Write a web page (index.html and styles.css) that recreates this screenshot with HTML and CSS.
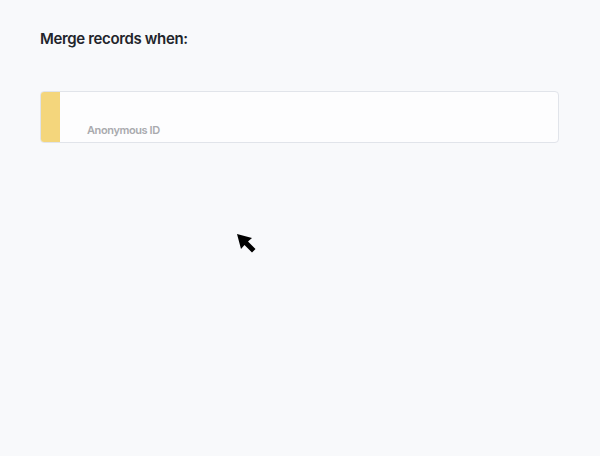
FILE: index.html
```html
<!DOCTYPE html>
<html lang="en">
<head>
  <meta charset="UTF-8">
  <title>Merge records</title>
  <link rel="stylesheet" href="styles.css">
</head>
<body>
  <div class="page">
    <h1>Merge records when:</h1>
    <div class="rule-card">
      <div class="rule-accent"></div>
      <div class="rule-body">
        <span class="rule-label">Anonymous ID</span>
      </div>
    </div>
  </div>
  <svg class="cursor" width="20" height="20" viewBox="0 0 20 20">
    <path d="M0 0 L4 15 L7.5 11 L15 18.5 L18.5 15 L11 7.5 L15 4 Z" fill="#000"/>
  </svg>
</body>
</html>
```
FILE: styles.css
```css
body {
  margin: 0;
  background-color: #f8f9fb;
  font-family: 'Inter', sans-serif;
  width: 600px;
  height: 456px;
  position: relative;
  overflow: hidden;
}

.page {
  padding: 29px 41px 0 40px;
}

h1 {
  margin: 0;
  font-size: 15px;
  font-weight: 600;
  letter-spacing: -0.35px;
  color: #22242a;
  line-height: 20px;
}

.rule-card {
  display: flex;
  margin-top: 42px;
  height: 50px;
  background-color: #fdfdfe;
  border: 1px solid #e1e4ea;
  border-radius: 4px;
  overflow: hidden;
}

.rule-accent {
  width: 19px;
  background-color: #f4d67c;
}

.rule-body {
  flex: 1;
  display: flex;
  align-items: flex-end;
  padding: 0 0 5px 27px;
}

.rule-label {
  font-size: 11px;
  font-weight: 600;
  letter-spacing: -0.4px;
  color: #a9aaae;
}

.cursor {
  position: absolute;
  left: 237px;
  top: 234px;
}
```
